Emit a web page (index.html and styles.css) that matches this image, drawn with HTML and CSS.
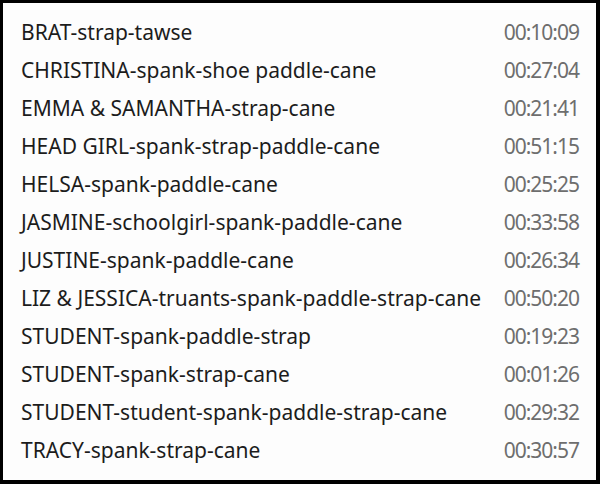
FILE: index.html
```html
<!DOCTYPE html>
<html lang="en">
<head>
    <meta charset="UTF-8">
    <title>Playlist</title>
    <link rel="stylesheet" href="styles.css">
</head>
<body>
    <div class="frame">
        <ul class="playlist">
            <li class="track"><span class="title">BRAT-strap-tawse</span><span class="time">00:10:09</span></li>
            <li class="track"><span class="title">CHRISTINA-spank-shoe paddle-cane</span><span class="time">00:27:04</span></li>
            <li class="track"><span class="title">EMMA &amp; SAMANTHA-strap-cane</span><span class="time">00:21:41</span></li>
            <li class="track"><span class="title">HEAD GIRL-spank-strap-paddle-cane</span><span class="time">00:51:15</span></li>
            <li class="track"><span class="title">HELSA-spank-paddle-cane</span><span class="time">00:25:25</span></li>
            <li class="track"><span class="title">JASMINE-schoolgirl-spank-paddle-cane</span><span class="time">00:33:58</span></li>
            <li class="track"><span class="title">JUSTINE-spank-paddle-cane</span><span class="time">00:26:34</span></li>
            <li class="track"><span class="title">LIZ &amp; JESSICA-truants-spank-paddle-strap-cane</span><span class="time">00:50:20</span></li>
            <li class="track"><span class="title">STUDENT-spank-paddle-strap</span><span class="time">00:19:23</span></li>
            <li class="track"><span class="title">STUDENT-spank-strap-cane</span><span class="time">00:01:26</span></li>
            <li class="track"><span class="title">STUDENT-student-spank-paddle-strap-cane</span><span class="time">00:29:32</span></li>
            <li class="track"><span class="title">TRACY-spank-strap-cane</span><span class="time">00:30:57</span></li>
        </ul>
    </div>
</body>
</html>
```

FILE: styles.css
```css
* {
    margin: 0;
    padding: 0;
    box-sizing: border-box;
}

body {
    font-family: 'Noto Sans', 'Open Sans', sans-serif;
    background: #000;
}

.frame {
    width: 600px;
    height: 484px;
    border: solid #000;
    border-width: 3px 4px 4px 3px;
    background: #fdfdfd;
}

.playlist {
    list-style: none;
    padding: 10px 18px 0 18px;
}

.track {
    display: flex;
    justify-content: space-between;
    align-items: center;
    height: 38px;
    font-size: 21px;
}

.title {
    color: #1c1c1c;
}

.time {
    color: #6e6e6e;
    letter-spacing: -1px;
    margin-right: -1px;
}
```
